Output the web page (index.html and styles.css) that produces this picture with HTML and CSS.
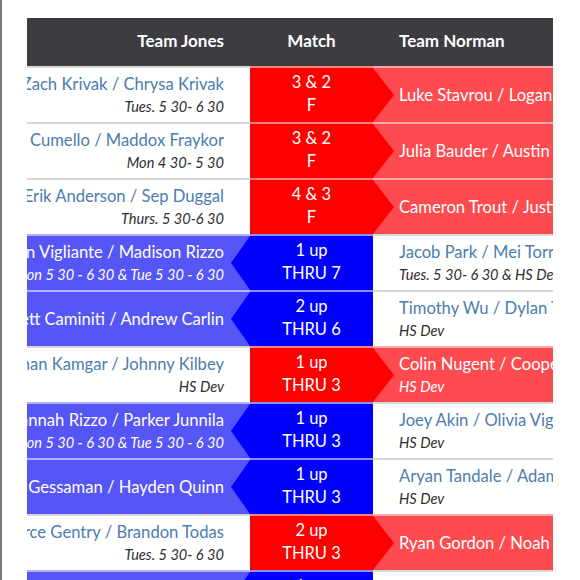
FILE: index.html
```html
<!DOCTYPE html>
<html>
<head>
<meta charset="utf-8">
<link rel="stylesheet" href="styles.css">
</head>
<body>
<div class="frame">
  <div class="board">
    <div class="row head">
      <div class="cell jones">Team Jones</div>
      <div class="cell match">Match</div>
      <div class="cell norman">Team Norman</div>
    </div>

    <div class="row norman-win">
      <div class="cell jones"><span class="name">Zach Krivak / Chrysa Krivak</span><span class="time">Tues. 5 30- 6 30</span></div>
      <div class="cell match"><span>3 &amp; 2</span><span>F</span></div>
      <div class="cell norman"><span class="name">Luke Stavrou / Logan Stavrou</span></div>
    </div>

    <div class="row norman-win">
      <div class="cell jones"><span class="name">Ava Cumello / Maddox Fraykor</span><span class="time">Mon 4 30- 5 30</span></div>
      <div class="cell match"><span>3 &amp; 2</span><span>F</span></div>
      <div class="cell norman"><span class="name">Julia Bauder / Austin Bauder</span></div>
    </div>

    <div class="row norman-win">
      <div class="cell jones"><span class="name">Erik Anderson / Sep Duggal</span><span class="time">Thurs. 5 30-6 30</span></div>
      <div class="cell match"><span>4 &amp; 3</span><span>F</span></div>
      <div class="cell norman"><span class="name">Cameron Trout / Justin Trout</span></div>
    </div>

    <div class="row jones-win">
      <div class="cell jones"><span class="name">Ryan Vigliante / Madison Rizzo</span><span class="time">Mon 5 30 - 6 30 &amp; Tue 5 30 - 6 30</span></div>
      <div class="cell match"><span>1 up</span><span>THRU 7</span></div>
      <div class="cell norman"><span class="name">Jacob Park / Mei Torres</span><span class="time">Tues. 5 30- 6 30 &amp; HS Dev</span></div>
    </div>

    <div class="row jones-win">
      <div class="cell jones"><span class="name">Brett Caminiti / Andrew Carlin</span></div>
      <div class="cell match"><span>2 up</span><span>THRU 6</span></div>
      <div class="cell norman"><span class="name">Timothy Wu / Dylan Tran</span><span class="time">HS Dev</span></div>
    </div>

    <div class="row norman-win">
      <div class="cell jones"><span class="name">Ethan Kamgar / Johnny Kilbey</span><span class="time">HS Dev</span></div>
      <div class="cell match"><span>1 up</span><span>THRU 3</span></div>
      <div class="cell norman"><span class="name">Colin Nugent / Cooper Nugent</span><span class="time">HS Dev</span></div>
    </div>

    <div class="row jones-win">
      <div class="cell jones"><span class="name">Hannah Rizzo / Parker Junnila</span><span class="time">Mon 5 30 - 6 30 &amp; Tue 5 30 - 6 30</span></div>
      <div class="cell match"><span>1 up</span><span>THRU 3</span></div>
      <div class="cell norman"><span class="name">Joey Akin / Olivia Vigliante</span><span class="time">HS Dev</span></div>
    </div>

    <div class="row jones-win">
      <div class="cell jones"><span class="name">Luke Gessaman / Hayden Quinn</span></div>
      <div class="cell match"><span>1 up</span><span>THRU 3</span></div>
      <div class="cell norman"><span class="name">Aryan Tandale / Adam Fox</span><span class="time">HS Dev</span></div>
    </div>

    <div class="row norman-win">
      <div class="cell jones"><span class="name">Pierce Gentry / Brandon Todas</span><span class="time">Tues. 5 30- 6 30</span></div>
      <div class="cell match"><span>2 up</span><span>THRU 3</span></div>
      <div class="cell norman"><span class="name">Ryan Gordon / Noah Gordon</span></div>
    </div>

    <div class="row jones-win">
      <div class="cell jones"><span class="name">Sam Hill / Max Hill</span></div>
      <div class="cell match"><span>1 up</span><span>THRU 2</span></div>
      <div class="cell norman"><span class="name">Jack Lee / Ben Lee</span></div>
    </div>
  </div>
</div>
</body>
</html>
```

FILE: styles.css
```css
html, body {
  margin: 0;
  padding: 0;
  background: #ffffff;
}

body {
  font-family: Lato, "Open Sans", sans-serif;
}

.frame {
  height: 580px;
  box-sizing: border-box;
  border-left: 2px solid #7c7c7c;
  padding: 18px 0 0 25px;
  overflow: hidden;
}

.board {
  width: 526px;
  overflow: hidden;
}

.row {
  display: grid;
  grid-template-columns: 223px 123px 180px;
  height: 56px;
}

.cell {
  box-sizing: border-box;
  display: flex;
  flex-direction: column;
  justify-content: center;
  white-space: nowrap;
  border-top: 2px solid #d8d8d8;
  color: #4b7dae;
}

.head {
  height: 48px;
  background: #3c3c41;
}

.head .cell {
  border-top: none;
  color: #ffffff;
  font-weight: 700;
  font-size: 17px;
  padding-bottom: 3px;
}

.jones {
  align-items: flex-end;
  padding-right: 26px;
}

.norman {
  align-items: flex-start;
  padding-left: 26px;
}

.match {
  position: relative;
  align-items: center;
  color: #ffffff;
  font-size: 16.5px;
  line-height: 23px;
  padding-bottom: 3px;
}

.name {
  font-size: 16.6px;
  line-height: 23px;
}

.time {
  font-size: 14.6px;
  line-height: 21px;
  font-style: italic;
  color: #2e2e2e;
}

/* Norman wins: red match cell pointing right */
.norman-win .jones {
  background: #ffffff;
}

.norman-win .match {
  background: #ff0000;
  border-top-color: rgba(255, 255, 255, 0.5);
}

.norman-win .norman {
  background: #fe4b50;
  color: #ffffff;
  border-top-color: rgba(255, 255, 255, 0.5);
}

.norman-win .norman .time {
  color: #ffffff;
}

.norman-win .match::after {
  content: "";
  position: absolute;
  top: 0;
  bottom: 0;
  left: 100%;
  width: 21px;
  background: #ff0000;
  clip-path: polygon(0 0, 100% 50%, 0 100%);
  z-index: 2;
}

/* Jones wins: blue match cell pointing left */
.jones-win .jones {
  background: #5656f6;
  color: #ffffff;
  border-top-color: rgba(255, 255, 255, 0.55);
}

.jones-win .jones .time {
  color: #ffffff;
}

.jones-win .match {
  background: #0000ff;
  border-top-color: rgba(255, 255, 255, 0.55);
}

.jones-win .norman {
  background: #ffffff;
}

.jones-win .match::before {
  content: "";
  position: absolute;
  top: 0;
  bottom: 0;
  right: 100%;
  width: 19px;
  background: #0000ff;
  clip-path: polygon(100% 0, 0 50%, 100% 100%);
  z-index: 2;
}
```
